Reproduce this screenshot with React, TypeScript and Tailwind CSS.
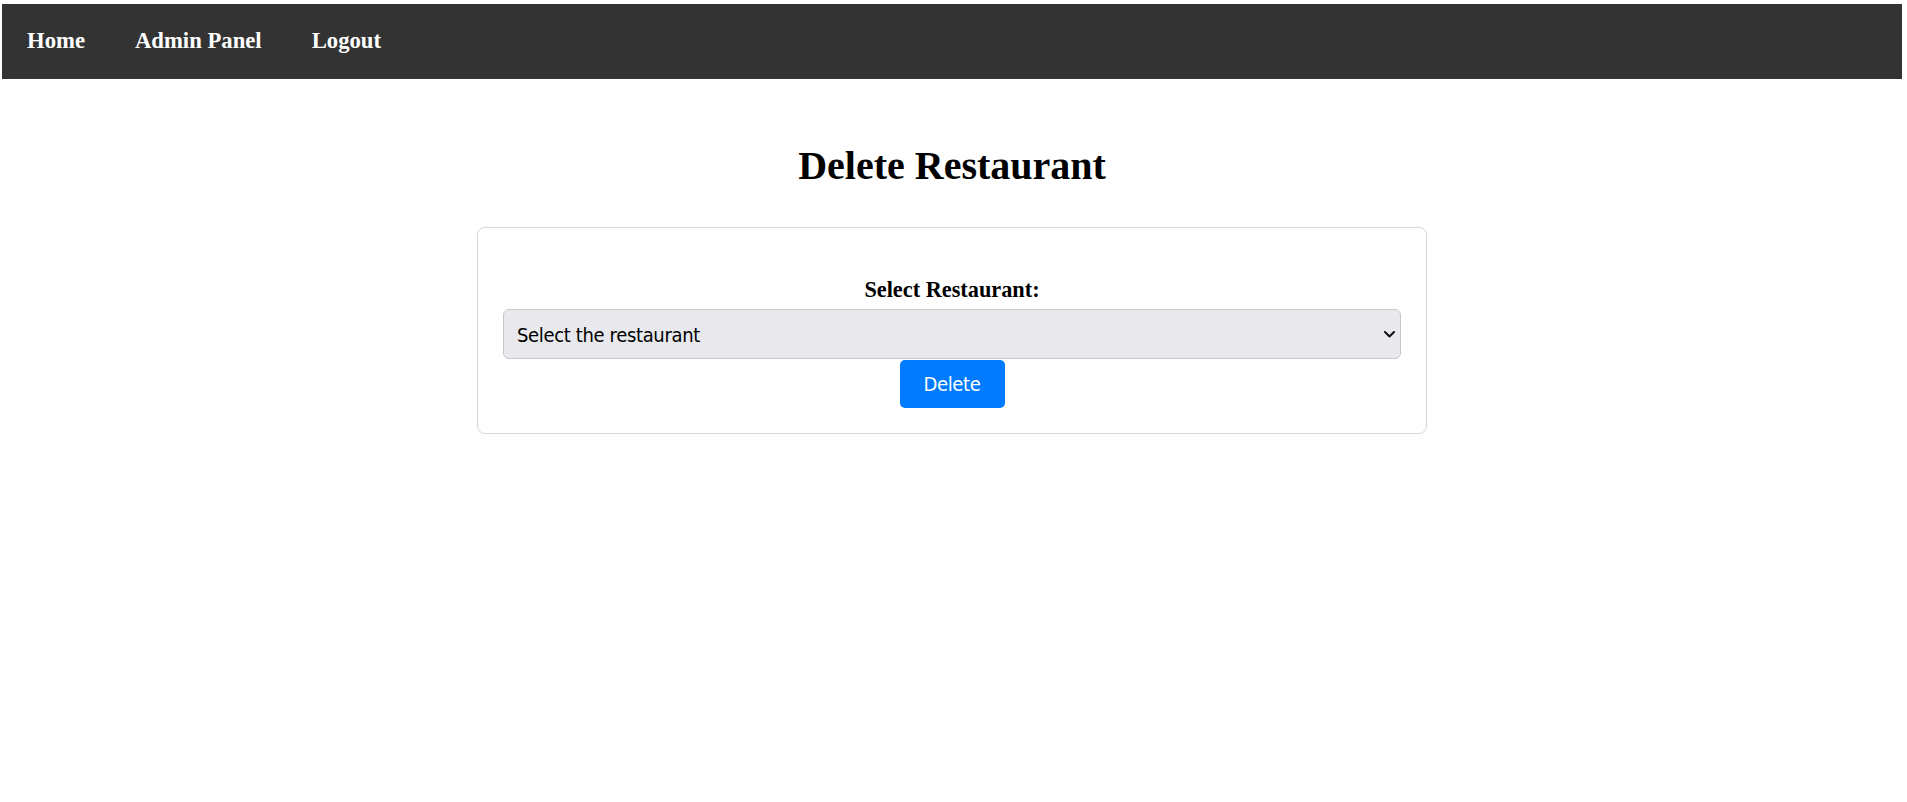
import React from "react";

export default function App() {
  const serif = { fontFamily: '"Liberation Serif", "Times New Roman", serif' };
  return (
    <div className="min-h-screen bg-white" style={serif}>
      <div className="ml-[2px] pt-[4px] w-[1900px]">
        <nav className="h-[75px] bg-[#333333] flex items-center">
          <a href="#" className="px-[25px] text-[22.7px] font-bold text-white">Home</a>
          <a href="#" className="px-[25px] text-[22.7px] font-bold text-white">Admin Panel</a>
          <a href="#" className="px-[25px] text-[22.7px] font-bold text-white">Logout</a>
        </nav>
        <h1 className="mt-[64px] text-center text-[40px] leading-[46px] font-bold text-black">
          Delete Restaurant
        </h1>
        <div className="mx-auto mt-[38px] w-[950px] border border-[#d6d6d6] rounded-[8px] px-[25px] pt-[49px] pb-[25px] flex flex-col items-center">
          <label className="text-[22.3px] leading-[25px] font-bold text-black">Select Restaurant:</label>
          <div className="relative mt-[7px] w-full">
            <select
              className="w-full h-[50px] appearance-none rounded-[6px] border border-[#c8c8c8] bg-[#e9e8ed] pl-[13px] pr-[30px] pt-[2px] text-[20px] tracking-[-0.35px] text-black outline-none"
              style={{ fontFamily: '"DejaVu Sans Condensed", "DejaVu Sans", Tahoma, sans-serif' }}
              defaultValue=""
            >
              <option value="">Select the restaurant</option>
            </select>
            <svg
              className="pointer-events-none absolute right-[6px] top-[22px]"
              width="11"
              height="7"
              viewBox="0 0 11 7"
              fill="none"
            >
              <polyline points="1,1 5.5,5.5 10,1" stroke="#111" strokeWidth="2" strokeLinecap="round" strokeLinejoin="round" />
            </svg>
          </div>
          <button
            className="mt-[1px] h-[48px] w-[105px] rounded-[5px] bg-[#007bff] text-[20px] tracking-[-0.35px] text-white"
            style={{ fontFamily: '"DejaVu Sans Condensed", "DejaVu Sans", Tahoma, sans-serif' }}
          >
            Delete
          </button>
        </div>
      </div>
    </div>
  );
}
